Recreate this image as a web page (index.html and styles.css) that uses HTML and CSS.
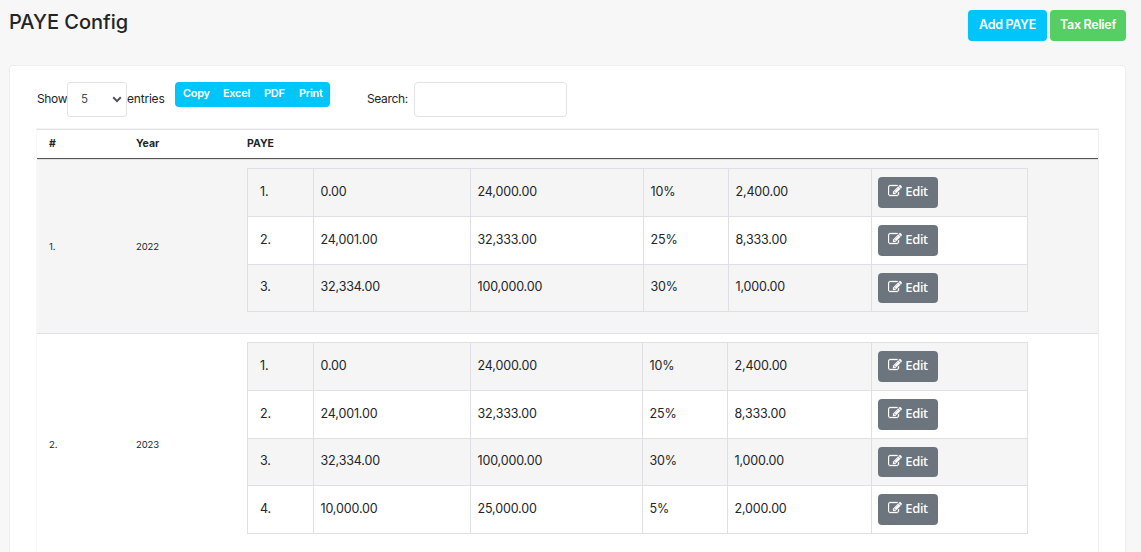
FILE: index.html
```
<!DOCTYPE html>
<html lang="en">
<head>
<meta charset="utf-8">
<title>PAYE Config</title>
<link rel="stylesheet" href="styles.css">
</head>
<body>
<svg class="sprite" aria-hidden="true"><symbol id="edit" viewBox="0 0 1792 1792"><path d="M888 1184l116-116-152-152-116 116v56h96v96h56zm440-720q-16-16-33 1l-350 350q-17 17-1 33t33-1l350-350q17-17 1-33zm80 594v190q0 119-84.500 203.500t-203.500 84.500h-832q-119 0-203.500-84.500t-84.500-203.500v-832q0-119 84.500-203.500t203.500-84.500h832q63 0 117 25 15 7 18 23 3 17-9 29l-49 49q-14 14-32 8-23-6-45-6h-832q-66 0-113 47t-47 113v832q0 66 47 113t113 47h832q66 0 113-47t47-113v-126q0-13 9-22l64-64q15-15 35-7t20 29zm-96-738l288 288-672 672h-288v-288zm444 132l-92 92-288-288 92-92q28-28 68-28t68 28l152 152q28 28 28 68t-28 68z"/></symbol></svg>
<header class="page-head">
  <h1>PAYE Config</h1>
  <div class="actions"><button class="btn add">Add PAYE</button><button class="btn relief">Tax Relief</button></div>
</header>
<main class="card">
  <div class="toolbar">
    <span class="label show">Show</span>
    <div class="select"><span>5</span><svg viewBox="0 0 10 7"><path d="M1.200 1.300 5 5.100 8.800 1.300"/></svg></div>
    <span class="label entries">entries</span>
    <div class="exports"><span class="copy">Copy</span><span class="excel">Excel</span><span class="pdf">PDF</span><span>Print</span></div>
    <span class="label search">Search:</span>
    <input class="field" type="text" aria-label="Search">
  </div>
  <div class="table">
    <div class="row head"><span>#</span><span>Year</span><span>PAYE</span></div>
    <div class="row first">
      <span class="meta">1.</span><span class="meta">2022</span>
      <div class="bands">
        <div class="band"><span>1.</span><span>0.00</span><span>24,000.00</span><span>10%</span><span>2,400.00</span><span><button class="edit"><svg><use href="#edit"/></svg>Edit</button></span></div>
        <div class="band"><span>2.</span><span>24,001.00</span><span>32,333.00</span><span>25%</span><span>8,333.00</span><span><button class="edit"><svg><use href="#edit"/></svg>Edit</button></span></div>
        <div class="band short"><span>3.</span><span>32,334.00</span><span>100,000.00</span><span>30%</span><span>1,000.00</span><span><button class="edit"><svg><use href="#edit"/></svg>Edit</button></span></div>
      </div>
    </div>
    <div class="row second">
      <span class="meta">2.</span><span class="meta">2023</span>
      <div class="bands narrow">
        <div class="band"><span>1.</span><span>0.00</span><span>24,000.00</span><span>10%</span><span>2,400.00</span><span><button class="edit"><svg><use href="#edit"/></svg>Edit</button></span></div>
        <div class="band"><span>2.</span><span>24,001.00</span><span>32,333.00</span><span>25%</span><span>8,333.00</span><span><button class="edit"><svg><use href="#edit"/></svg>Edit</button></span></div>
        <div class="band short"><span>3.</span><span>32,334.00</span><span>100,000.00</span><span>30%</span><span>1,000.00</span><span><button class="edit"><svg><use href="#edit"/></svg>Edit</button></span></div>
        <div class="band"><span>4.</span><span>10,000.00</span><span>25,000.00</span><span>5%</span><span>2,000.00</span><span><button class="edit"><svg><use href="#edit"/></svg>Edit</button></span></div>
      </div>
    </div>
  </div>
</main>
</body>
</html>
```
FILE: styles.css
```
* { box-sizing: border-box; }
body {
  margin: 0;
  background: #f7f7f7;
  color: #212529;
  font-family: Inter, "Liberation Sans", sans-serif;
  font-size: 12px;
}
.sprite { display: none; }
button { border: 0; margin: 0; font-family: inherit; }

.page-head {
  display: flex;
  justify-content: space-between;
  height: 65px;
  padding: 10px 15px 0 9px;
}
h1 { margin: 0; font-size: 20px; line-height: 24px; font-weight: 450; letter-spacing: 0; }
.actions { display: flex; gap: 3px; }
.btn {
  height: 31px;
  padding: 0 0 3px;
  border-radius: 4px;
  color: #fff;
  font-size: 12.5px;
  font-weight: 600;
  letter-spacing: -.3px;
  white-space: nowrap;
}
.add { width: 79px; background: #00c5fb; }
.relief { width: 76px; background: #55ce63; }

.card {
  width: 1117px;
  height: 487px;
  margin-left: 9px;
  padding: 16px 27px 0;
  background: #fff;
  border: 1px solid #ededed;
  border-bottom: 0;
  border-radius: 4px 4px 0 0;
}
.toolbar { display: flex; height: 46px; }
.label { line-height: 34px; letter-spacing: -.35px; white-space: nowrap; }
.show { width: 30px; }
.entries { width: 48px; letter-spacing: -.2px; }
.search { width: 47px; margin-left: 37px; }
.select {
  display: flex;
  align-items: center;
  justify-content: space-between;
  width: 60px;
  height: 35px;
  padding: 0 4px 0 13px;
  border: 1px solid #e3e3e3;
  border-radius: 3px;
  color: #495057;
  font-size: 11.5px;
}
.select span { padding-bottom: 1px; }
.select svg { width: 10px; height: 7px; fill: none; stroke: #495057; stroke-width: 2; }
.exports {
  display: flex;
  width: 155px;
  height: 25px;
  padding-left: 8px;
  border-radius: 4px;
  background: #00c5fb;
  color: #fff;
  font-size: 11px;
  font-weight: 600;
  line-height: 22px;
  letter-spacing: -.3px;
}
.copy { width: 40px; }
.excel { width: 41px; }
.pdf { width: 35px; }
.field { width: 153px; height: 35px; border: 1px solid #e3e3e3; border-radius: 4px; }

.table { width: 1062px; border-right: 1px solid #f0f0f0; box-shadow: -1px 0 #f7f7f7; }
.row { display: grid; grid-template-columns: 99px 111px 781px; }
.row > span:first-child { padding-left: 12px; }
.head {
  height: 31px;
  border-top: 1px solid #f4f4f5;
  border-bottom: 1px solid #555;
  box-shadow: inset 0 1px #dee2e6;
  font-size: 10.5px;
  font-weight: 700;
  line-height: 29px;
}
.first { height: 174px; padding-top: 8px; background: #f5f5f5; border-top: 1px solid #e1e1e1; }
.second { height: 219px; padding-top: 8px; border-top: 1px solid #dee2e6; }
.meta { align-self: start; font-size: 9.5px; line-height: 14px; letter-spacing: -.15px; }
.first .meta { margin-top: 72px; }
.second .meta { margin-top: 96px; }

.bands { align-self: start; border: 1px solid #dee0e6; border-top: 0; }
.band {
  display: grid;
  grid-template-columns: 65px 157px 173px 85px 143px 156px;
  height: 48px;
  border-top: 1px solid #dee0e6;
  background: #fff;
  font-size: 12.5px;
  line-height: 45px;
  letter-spacing: -.15px;
}
.narrow .band { grid-template-columns: 65px 157px 172px 85px 144px 156px; }
.short { line-height: 44px; }
.bands .short { height: 47px; }
.band:nth-child(odd) { background: #f5f5f5; }
.band > span { padding-left: 6.5px; border-left: 1px solid #dee0e6; }
.band > span:first-child { padding-left: 12px; border-left: 0; }
.band > span:last-child { padding-left: 6px; }
.edit {
  display: flex;
  align-items: center;
  justify-content: center;
  gap: 3px;
  width: 60px;
  height: 31px;
  margin-top: 8px;
  padding: 0 0 3px;
  border-radius: 4px;
  background: #6c757d;
  color: #fff;
  font: 500 13px "Noto Sans", sans-serif;
  letter-spacing: -.3px;
}
.short .edit { height: 30px; }
.edit svg { width: 14px; height: 14px; fill: #fff; stroke: #fff; stroke-width: 40; }
```
